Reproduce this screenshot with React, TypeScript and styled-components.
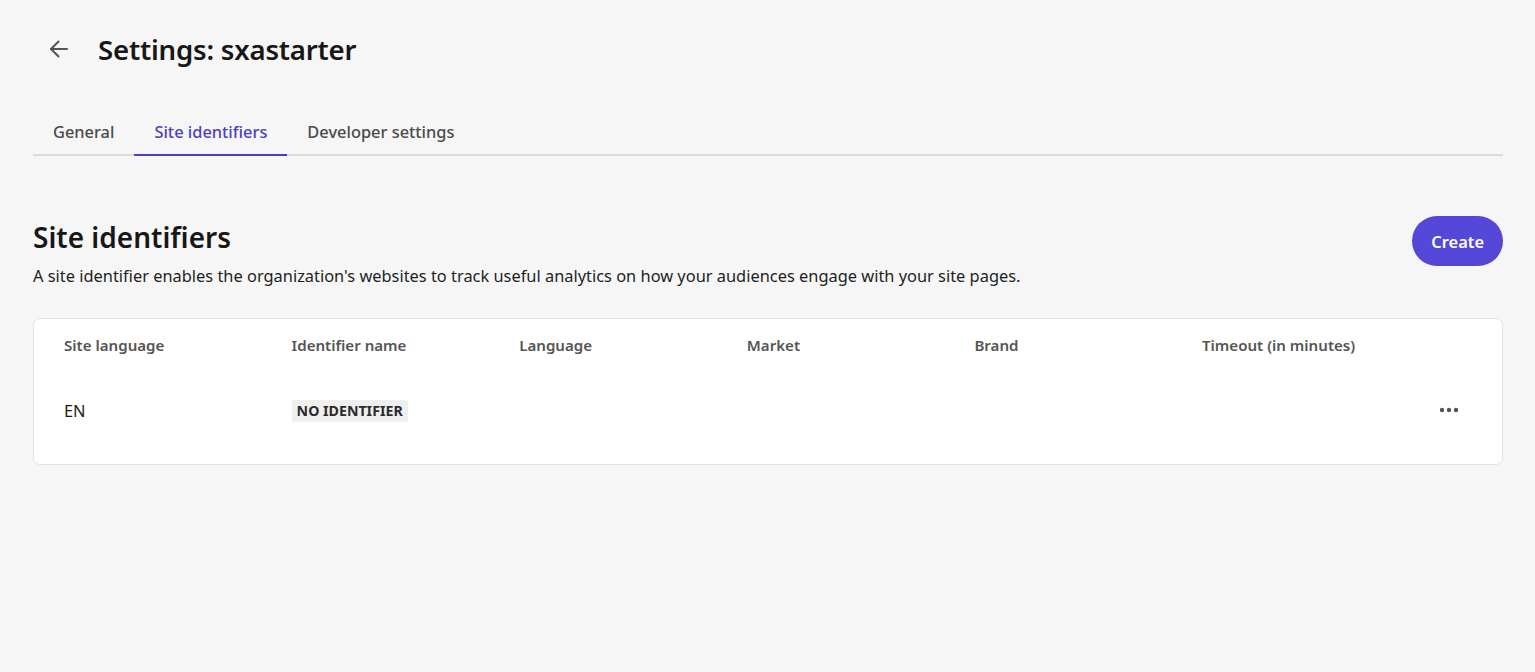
import React from 'react';
import styled, {createGlobalStyle} from 'styled-components';

const GlobalStyle = createGlobalStyle`
  html, body {
    margin: 0;
    padding: 0;
    background: #f6f6f6;
    font-family: "Noto Sans", "Open Sans", Arial, sans-serif;
    color: #171717;
  }
`

const Page = styled.div`
  padding: 24px 32px 40px 33px;
  box-sizing: border-box;
  width: 1535px;
  min-height: 672px;
`

const Header = styled.div`
  display: flex;
  align-items: center;
  gap: 23px;
  height: 50px;
  padding-left: 10px;
`

const BackButton = styled.button`
  width: 32px;
  height: 32px;
  border: none;
  background: transparent;
  padding: 0;
  display: flex;
  align-items: center;
  justify-content: center;
  color: #555;
  cursor: pointer;
`

const Title = styled.h1`
  margin: 0;
  font-size: 27.6px;
  font-weight: 600;
  letter-spacing: -0.2px;
`

const TabBar = styled.div`
  display: flex;
  margin-top: 36px;
  border-bottom: 2px solid #dcdcdc;
`

const Tab = styled.div<{ active?: boolean }>`
  padding: 10px 20px 11px;
  font-size: 16.4px;
  font-weight: 500;
  color: ${props => props.active ? '#4a3fc4' : '#4a4a4a'};
  margin-bottom: -2px;
  border-bottom: 2px solid ${props => props.active ? '#4a3fc4' : 'transparent'};
`

const SectionHeader = styled.div`
  display: flex;
  justify-content: space-between;
  align-items: flex-start;
  margin-top: 61px;
`

const SectionTitle = styled.h2`
  margin: 0;
  font-size: 28px;
  font-weight: 600;
  line-height: 40px;
`

const SectionText = styled.p`
  margin: 7px 0 0;
  font-size: 16.4px;
  line-height: 24px;
  color: #1e1e1e;
`

const CreateButton = styled.button`
  height: 50px;
  margin-top: -1px;
  padding: 0 19px;
  border: none;
  border-radius: 25px;
  background: #5547d8;
  color: #fff;
  font-family: inherit;
  font-size: 16.4px;
  font-weight: 600;
  cursor: pointer;
`

const Card = styled.div`
  margin-top: 30px;
  background: #fff;
  border: 1px solid #e3e3e3;
  border-radius: 7px;
  padding: 11px 30px 19px;
`

const Row = styled.div<{ head?: boolean }>`
  display: grid;
  grid-template-columns: repeat(6, 227.6px) 1fr;
  align-items: center;
  height: ${props => props.head ? '30px' : '70px'};
  margin-top: ${props => props.head ? '0' : '15px'};
`

const HeadCell = styled.div`
  font-size: 15.1px;
  font-weight: 600;
  color: #555;
`

const Cell = styled.div`
  font-size: 16.4px;
  color: #1a1a1a;
`

const Badge = styled.span`
  display: inline-block;
  background: #efefef;
  color: #2b2b2b;
  font-size: 14.2px;
  font-weight: 700;
  padding: 1px 5px;
  border-radius: 2px;
  line-height: 20px;
`

const MoreButton = styled.button`
  justify-self: end;
  width: 32px;
  height: 32px;
  margin-right: 7px;
  border: none;
  background: transparent;
  display: flex;
  align-items: center;
  justify-content: center;
  color: #555;
  padding: 0;
`

const columns = ['Site language', 'Identifier name', 'Language', 'Market', 'Brand', 'Timeout (in minutes)'];

function App() {
  return (
    <>
      <GlobalStyle/>
      <Page>
        <Header>
          <BackButton aria-label="Back">
            <svg width="20" height="20" viewBox="0 0 20 20" fill="none" stroke="currentColor" strokeWidth="2" strokeLinecap="round" strokeLinejoin="round">
              <path d="M18 10H2"/>
              <path d="M9.5 2.5L2 10l7.5 7.5"/>
            </svg>
          </BackButton>
          <Title>Settings: sxastarter</Title>
        </Header>
        <TabBar>
          <Tab>General</Tab>
          <Tab active>Site identifiers</Tab>
          <Tab>Developer settings</Tab>
        </TabBar>
        <SectionHeader>
          <div>
            <SectionTitle>Site identifiers</SectionTitle>
            <SectionText>
              A site identifier enables the organization's websites to track useful analytics on how your audiences engage with your site pages.
            </SectionText>
          </div>
          <CreateButton>Create</CreateButton>
        </SectionHeader>
        <Card>
          <Row head>
            {columns.map(c => (<HeadCell key={c}>{c}</HeadCell>))}
            <div/>
          </Row>
          <Row>
            <Cell>EN</Cell>
            <Cell><Badge>NO IDENTIFIER</Badge></Cell>
            <Cell/>
            <Cell/>
            <Cell/>
            <Cell/>
            <MoreButton aria-label="More">
              <svg width="20" height="6" viewBox="0 0 20 6" fill="currentColor">
                <circle cx="3" cy="3" r="2.2"/>
                <circle cx="10" cy="3" r="2.2"/>
                <circle cx="17" cy="3" r="2.2"/>
              </svg>
            </MoreButton>
          </Row>
        </Card>
      </Page>
    </>
  );
}

export default App;
